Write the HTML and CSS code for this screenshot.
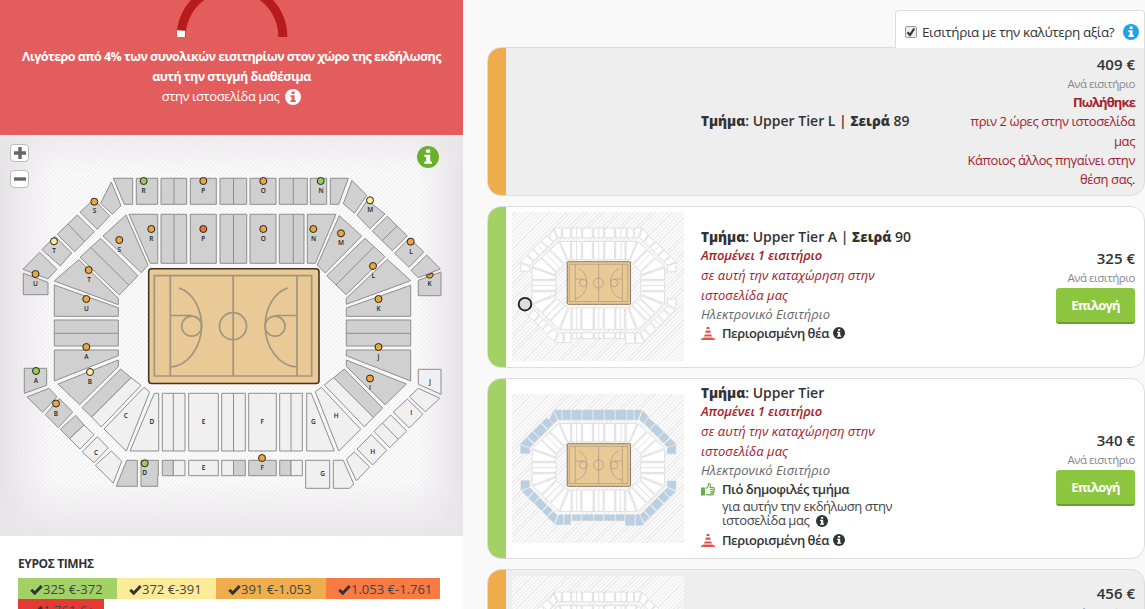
FILE: index.html
```
<!doctype html>
<html lang="el">
<head>
<meta charset="utf-8">
<title>Εισιτήρια</title>
<link rel="stylesheet" href="styles.css">
</head>

<body>
<svg class="defs" width="0" height="0">
	<defs>
		<pattern id="hatch" width="4.4" height="4.4" patternUnits="userSpaceOnUse">
			<path d="M-1 5.4L5.4 -1M-1 1L1 -1M3.4 5.4L5.4 3.4" stroke="#e3e3e3" stroke-width=".65"/>
		</pattern>
		<linearGradient id="fadeX">
			<stop offset="0" stop-color="#e6e3e7"/>
			<stop offset=".12" stop-color="#e6e3e7" stop-opacity="0"/>
			<stop offset=".9" stop-color="#e6e3e7" stop-opacity="0"/>
			<stop offset="1" stop-color="#e6e3e7"/>
		</linearGradient>
		<linearGradient id="fadeY" x2="0" y2="1">
			<stop offset="0" stop-color="#e8e6e8" stop-opacity=".7"/>
			<stop offset=".1" stop-color="#e8e6e8" stop-opacity="0"/>
			<stop offset=".86" stop-color="#e8e6e8" stop-opacity="0"/>
			<stop offset="1" stop-color="#e8e6e8"/>
		</linearGradient>
		<g id="court">
			<rect x="148.7" y="268.7" width="170.3" height="114.8" rx="3" fill="#e9c995" stroke="#49321f" stroke-width="1.6"/>
			<g class="lines">
				<path d="M154.3 275.7H311.7V376H154.3ZM170.3 275.7V376M233.2 275.7V376M297 275.7V376M170.3 315.5H192M297 315.5H275.3M179 288C194 293 201.5 310 201.5 326C201.5 347 188 366 170.3 367M287.7 288C272.7 293 265.2 310 265.2 326C265.2 347 278.7 366 297 367"/>
				<circle cx="191.7" cy="326.2" r="10"/>
				<circle cx="275" cy="326.2" r="10"/>
				<circle cx="233" cy="326.2" r="13.5"/>
			</g>
		</g>
		<g id="arena">
			<!-- upper tier -->
			<path class="up on" d="M111.3 182L121 205.7L112.3 214.3L100.7 203.3ZM113.3 178.3H132.7V204.3H124.3ZM136.3 178.3H157.7V204.3H136.3ZM161 178.3H186.7V204.3H161ZM174 178.3V204.3M190.3 178.3H216.3V204.3H190.3ZM220 178.3H246.7V204.3H220ZM233.5 178.3V204.3M250 178.3H276V204.3H250ZM279.3 178.3H307.3V204.3H279.3ZM293.3 178.3V204.3M310.3 178.3H326.7V204.3H310.3ZM330.3 178.3H348.3L338.7 204.3H330.3ZM352 180.3L366.7 195.3L354.5 213.3L343.3 203.7ZM367.3 200.3L385 214L370 228.7L357 215.3ZM387.3 216.3L407.3 236L392.3 250.7L372.3 231ZM397.3 226L382 240.7M409.3 238L423.7 252L409 267.3L394.7 253.3ZM426.7 255L440.3 269L418.3 277.7L411 270.3ZM441 272V295.7H418.3V280.3ZM97 202.5L109.7 216L97.3 229.3L80 212.3L92 201ZM77.3 215L94.3 231.7L74.7 251.7L57.3 234.3ZM68.3 224.3L85 242M55 236.3L71.7 253L60.3 266L42 249.7ZM39.7 252.3L57 269.3L48 279L23 269.3ZM23.3 273.3L48 282.3V294.7H23.3Z"/>
			<path class="up on" d="M24.3 368.3H46.7V385.3L24.3 393.3ZM49 388.3L57 396.7L42.7 412.3L27 397ZM59.3 398.3L72.7 412.3L58.3 427.7L45.3 414.7ZM75.7 415.3L84 425L69.7 438.7L60.3 429.3ZM126.7 460.3H137.3V486.3H116.3ZM141 460.3H158.3V475.7H157.7V486.3H141ZM162.3 460.3H173.3V475.7H162.3ZM233.5 460.3H245.3V475.7H233.5ZM248.7 460.3H276.3V475.7H248.7ZM279.7 460.3H291V475.7H279.7Z"/>
			<path class="up off" d="M84 425L94 434.7L80 449L69.7 438.7ZM97.3 436.7L108.3 448L94 462.7L82.3 452ZM111.3 451L121.7 461.3L113.3 483L95.3 465.3ZM173.3 460.3H185V475.7H173.3ZM188.7 460.3H218.3V475.7H188.7ZM221.7 460.3H233.5V475.7H221.7ZM291 460.3H302.3V475.7H291ZM305.7 460.3H329.7V488.3H305.7ZM333.3 460.3H343.3L353.7 484L349.7 488.3H333.3ZM354.3 452L369.7 467L356.3 480.7L346.3 459.3ZM371.3 434.7L386.7 450.3L372.7 465L357 449ZM390.7 415L406.7 431L389.7 447.7L374 431.3ZM382.7 423.3L398 439M407.3 399L423 414.3L409.3 428L393.3 412ZM418.3 388.3L439.7 398.3L425.3 411.7L409.3 396.7ZM418.3 369.3H441V394.3L418.3 384.3Z"/>
			<!-- lower tier -->
			<path class="low on" d="M129 214.3H157.7V263.3H150.3ZM161 214.3H186.7V263.3H161ZM174 214.3V263.3M190.3 214.3H216.3V263.3H190.3ZM220 214.3H246.7V263.3H220ZM233.5 214.3V263.3M250 214.3H276V263.3H250ZM279.3 214.3H304V263.3H279.3ZM293.3 214.3V263.3M307.3 214.3H336L315.3 263.3H307.3ZM339.3 215.7L361.7 236L325.3 273L317.3 265ZM365 238.3L385 256.7L346 294.7L326.7 275.7ZM373.7 247L336 285M387.3 259.3L410.7 280.7L346.3 304.3V298.3ZM410.7 285.3V316.3H346.3V308ZM346.3 320H410.7V346H346.3ZM346.3 333.3H410.7M126 215L148 265L141.3 272.7L103 236ZM100.7 238.3L138 275.7L119.3 295L80 257.3ZM90.7 247.3L128.7 285M78.7 259.7L118.3 298.3V304.7L54.3 281ZM54.3 285L118.3 307.7V316.3H54.3ZM54.3 320H118.3V346H54.3ZM54.3 333.3H118.3M54.3 350H118.3V355.7L54.3 381ZM118.3 360V366.7L79.7 404.7L58 384ZM120.7 369L131 377.7L91.7 417L82 407.7ZM344.3 369L382.7 408L373.3 417.3L333.7 377.7ZM346.3 360L406.3 384L385 404.7L346.3 366.3ZM346.3 350H410.7V381L346.3 355.7Z"/>
			<path class="low off" d="M131 377.7L141 385.3L101.3 427L91.7 417ZM144 387.3L149.7 392L126.3 451L104 429ZM154.3 393.3H158.7V451H130ZM162.3 393.3H185V451H162.3ZM173.3 393.3V451M188.7 393.3H218.3V451H188.7ZM221.7 393.3H245.3V451H221.7ZM233.5 393.3V451M248.7 393.3H276.3V451H248.7ZM279.7 393.3H302.3V451H279.7ZM291 393.3V451M306.7 393.3H311.3L334.3 451H306.7ZM321.3 387.3L360.7 429.3L338.7 451L315.3 391.7ZM324.3 385L333.7 377.7L373.3 417.3L364.3 426.7Z"/>
			<use href="#court"/>
		</g>
		<symbol id="info" viewBox="0 0 16 16">
			<circle cx="8" cy="8" r="8" fill="currentColor"/>
			<path d="M6.6 2.6h3v2.3h-3zM5.4 6.3h4.2v4.9h1.2v1.7H5.4v-1.7h1.3V8H5.4z" fill="var(--mark, #fff)"/>
		</symbol>
		<symbol id="cone" viewBox="0 0 14 15">
			<path d="M5.8 1h2.4l.5 2H5.3zM4.8 4.600h4.400l.6 2.200H4.200zM3.700 8.400h6.600l.6 2.100H3.100zM0 12.600h1.700l.7-1h9.200l.7 1H14V14H0z" fill="#d9534f"/>
		</symbol>
		<symbol id="thumb" viewBox="0 0 14 14">
			<path d="M0 5h4v8H0z" fill="#6bb044"/>
			<path d="M5 6.2C7 5 7.6 3.5 7.7 1.2 9.8 .8 9.7 3.5 9 5.2h3.6c1 .2 1 1.8 0 1.9.9.3.8 1.7-.2 1.9.7.4.5 1.5-.4 1.7.5.6 0 1.7-.9 1.7H7.5L5 11.8M9.3 7.2h3M9.3 9.1h3M9.3 10.9h2.5" fill="none" stroke="#6bb044" stroke-width="1.2"/>
		</symbol>
		<symbol id="check" viewBox="0 0 13 11">
			<path d="M1.3 5.8L4.7 9.2L11.7 2" fill="none" stroke="#333" stroke-width="3"/>
		</symbol>
	</defs>
</svg>

<div class="page">
	<div class="left">
		<div class="alert">
			<svg class="gauge" width="112" height="37" viewBox="176 0 112 37">
				<path d="M181.2 37A50.8 50.8 0 0 1 282.8 37" fill="none" stroke="#b81b1b" stroke-width="9"/>
				<path d="M177 30.2L185.3 30.8L185 37H177Z" fill="#fff"/>
			</svg>
			<p><b>Λιγότερο από 4% των συνολικών εισιτηρίων στον χώρο της εκδήλωσης</b></p>
			<p><b>αυτή την στιγμή διαθέσιμα</b></p>
			<p>στην ιστοσελίδα μας <svg class="ico-info"><use href="#info"/></svg></p>
		</div>

		<div class="map">
			<svg width="463" height="401" viewBox="0 135 463 401">
				<rect class="bg" y="135" width="463" height="401"/>
				<rect y="135" width="463" height="401" fill="url(#hatch)"/>
				<rect y="135" width="463" height="401" fill="url(#fadeX)"/>
				<rect y="135" width="463" height="401" fill="url(#fadeY)"/>
				<use href="#arena"/>
				<g class="dots">
					<g class="green">
						<circle cx="143.7" cy="181" r="3.5"/><circle cx="320.7" cy="181" r="3.5"/><circle cx="36" cy="371" r="3.5"/><circle cx="144.7" cy="463.3" r="3.5"/>
					</g>
					<g class="yellow">
						<circle cx="54" cy="241.3" r="3.5"/><circle cx="370" cy="200.3" r="3.5"/><circle cx="90" cy="372" r="3.5"/>
					</g>
					<g class="orange">
						<circle cx="203.3" cy="181" r="3.5"/><circle cx="94.3" cy="201.7" r="3.5"/><circle cx="35.5" cy="274" r="3.5"/><circle cx="119.3" cy="240" r="3.5"/><circle cx="151.3" cy="229" r="3.5"/><circle cx="88.7" cy="270" r="3.5"/><circle cx="86.3" cy="299" r="3.5"/><circle cx="263.3" cy="181" r="3.5"/><circle cx="263.3" cy="229" r="3.5"/><circle cx="313.3" cy="229" r="3.5"/><circle cx="341" cy="233.3" r="3.5"/><circle cx="410.7" cy="241.7" r="3.5"/><circle cx="373" cy="266" r="3.5"/><path d="M426.2 275.5L432.7 273A3.5 3.5 0 1 1 426.2 275.5Z"/><circle cx="378.5" cy="299" r="3.5"/><circle cx="86.3" cy="347" r="3.5"/><circle cx="56" cy="403.5" r="3.5"/><circle cx="378.5" cy="347" r="3.5"/><circle cx="370" cy="378.5" r="3.5"/><circle cx="262" cy="458" r="3.5"/>
					</g>
					<g class="red"><circle cx="203.3" cy="229" r="3.5"/></g>
				</g>
				<g class="names">
					<text x="143.7" y="193">R</text><text x="203.3" y="193">P</text><text x="263.3" y="193">O</text><text x="321" y="193">N</text>
					<text x="94.5" y="213">S</text><text x="54" y="253">T</text><text x="35.5" y="286">U</text>
					<text x="119.3" y="252">S</text><text x="151.3" y="241">R</text><text x="203.3" y="241">P</text><text x="263.3" y="241">O</text><text x="313.5" y="241">N</text>
					<text x="89" y="282">T</text><text x="86.5" y="311">U</text><text x="341" y="245">M</text><text x="370.3" y="212">M</text>
					<text x="411" y="254">L</text><text x="373.3" y="278">L</text><text x="429.5" y="286">K</text><text x="378.5" y="311">K</text>
					<text x="86.5" y="359">A</text><text x="36" y="383">A</text><text x="90" y="384">B</text><text x="56" y="416">B</text>
					<text x="125.7" y="418">C</text><text x="96" y="455">C</text><text x="152" y="424">D</text><text x="144.7" y="475">D</text>
					<text x="203.5" y="424">E</text><text x="203.5" y="470">E</text><text x="262.3" y="424">F</text><text x="262.3" y="470">F</text>
					<text x="313.3" y="424">G</text><text x="322.7" y="476">G</text><text x="336.3" y="418">H</text><text x="372.7" y="454">H</text>
					<text x="411.3" y="415">I</text><text x="370" y="390">I</text><text x="378.5" y="359">J</text><text x="430" y="384">J</text>
				</g>
			</svg>
			<div class="zoom">
				<span class="btn"><svg width="12" height="12"><path d="M6 0V12M0 6H12" stroke="#666" stroke-width="3.4"/></svg></span>
				<span class="btn"><svg width="12" height="12"><path d="M0 6H12" stroke="#666" stroke-width="3.4"/></svg></span>
			</div>
			<svg class="map-info"><use href="#info"/></svg>
		</div>

		<div class="legend">
			<h4>ΕΥΡΟΣ ΤΙΜΗΣ</h4>
			<div class="ranges">
				<span class="range r1"><svg><use href="#check"/></svg>325 €-372</span>
				<span class="range r2"><svg><use href="#check"/></svg>372 €-391</span>
				<span class="range r3"><svg><use href="#check"/></svg>391 €-1.053</span>
				<span class="range r4"><svg><use href="#check"/></svg>1.053 €-1.761</span>
				<span class="range r5"><svg><use href="#check"/></svg>1.761 €+</span>
			</div>
		</div>
	</div>

	<div class="right">
		<div class="best">
			<span class="box"><svg width="10" height="10"><path d="M1.5 5.2L4 8L8.3 1.5" fill="none" stroke="#333" stroke-width="2.2"/></svg></span>
			<span class="best-text">Εισιτήρια με την καλύτερη αξία?</span>
			<svg class="ico-best"><use href="#info"/></svg>
		</div>

		<div class="card sold first">
			<div class="bar orange-bar"></div>
			<div class="thumb"></div>
			<div class="info">
				<h3><b>Τμήμα</b>: Upper Tier L | <b>Σειρά</b> 89</h3>
			</div>
			<div class="price">
				<div class="amount">409 €</div>
				<div class="per">Ανά εισιτήριο</div>
				<div class="gone"><b>Πωλήθηκε</b><br>πριν 2 ώρες στην ιστοσελίδα<br>μας<br>Κάποιος άλλος πηγαίνει στην<br>θέση σας.</div>
			</div>
		</div>

		<div class="card second">
			<div class="bar green-bar"></div>
			<div class="thumb">
				<svg class="mini" width="172" height="149" viewBox="0 135 463 401">
					<use href="#arena"/>
					<circle cx="35" cy="383" r="17" fill="#ddd" stroke="#222" stroke-width="5"/>
				</svg>
			</div>
			<div class="info">
				<h3><b>Τμήμα</b>: Upper Tier A | <b>Σειρά</b> 90</h3>
				<p class="left-one">Απομένει 1 εισιτήριο</p>
				<p class="where">σε αυτή την καταχώρηση στην<br>ιστοσελίδα μας</p>
				<p class="kind">Ηλεκτρονικό Εισιτήριο</p>
				<p class="tag"><svg class="cone"><use href="#cone"/></svg><b>Περιορισμένη θέα</b><svg class="ico-dark"><use href="#info"/></svg></p>
			</div>
			<div class="price">
				<div class="amount">325 €</div>
				<div class="per">Ανά εισιτήριο</div>
				<a class="select">Επιλογή</a>
			</div>
		</div>

		<div class="card third">
			<div class="bar green-bar"></div>
			<div class="thumb">
				<svg class="mini picked" width="172" height="149" viewBox="0 135 463 401">
					<use href="#arena"/>
				</svg>
			</div>
			<div class="info">
				<h3><b>Τμήμα</b>: Upper Tier</h3>
				<p class="left-one">Απομένει 1 εισιτήριο</p>
				<p class="where">σε αυτή την καταχώρηση στην<br>ιστοσελίδα μας</p>
				<p class="kind">Ηλεκτρονικό Εισιτήριο</p>
				<p class="tag"><svg class="hand"><use href="#thumb"/></svg><b>Πιό δημοφιλές τμήμα</b></p>
				<p class="note">για αυτήν την εκδήλωση στην<br>ιστοσελίδα μας <svg class="ico-dark"><use href="#info"/></svg></p>
				<p class="tag"><svg class="cone"><use href="#cone"/></svg><b>Περιορισμένη θέα</b><svg class="ico-dark"><use href="#info"/></svg></p>
			</div>
			<div class="price">
				<div class="amount">340 €</div>
				<div class="per">Ανά εισιτήριο</div>
				<a class="select">Επιλογή</a>
			</div>
		</div>

		<div class="card sold fourth">
			<div class="bar orange-bar"></div>
			<div class="thumb">
				<svg class="mini" width="172" height="149" viewBox="0 135 463 401">
					<use href="#arena"/>
				</svg>
			</div>
			<div class="info"></div>
			<div class="price">
				<div class="amount">456 €</div>
				<div class="per">Ανά εισιτήριο</div>
			</div>
		</div>
	</div>
</div>
</body>
</html>
```
FILE: styles.css
```
* { margin:0; padding:0; box-sizing:border-box;}
body{ font-family:"Open Sans","Noto Sans",sans-serif; font-size:13px; color:#333; background:#f9f9f9; overflow:hidden;}
.defs{ position:absolute;}
.page{ display:flex; width:1145px; height:609px; overflow:hidden;}

/* left column */
.left{ width:463px; height:609px; background:#fff; overflow:hidden; flex:none;}
.alert{ height:135px; background:#e45d5d; color:#fff; text-align:center; border-bottom:1px solid #dd6262;}
.alert p{ height:20px; line-height:20px; font-size:13px; letter-spacing:-.42px; white-space:nowrap;}
.alert b{ font-size:12.5px; letter-spacing:-.53px;}
.gauge{ display:block; margin:0 auto 9px;}
.ico-info{ width:16px; height:16px; vertical-align:-4px; margin-left:3px; --mark:#e45d5d;}

.map{ height:401px; position:relative; --up-on:#d0d0d0; --up-off:#f0f0f0; --low-on:#d0d0d0; --low-off:#f0f0f0; --edge:#8e8e8e;}
.map > svg{ display:block;}
.bg{ fill:#fcfbfc;}
.up, .low{ stroke:var(--edge); stroke-width:var(--edge-width, 1);}
.up.on{ fill:var(--up-on);}
.up.off{ fill:var(--up-off);}
.low.on{ fill:var(--low-on);}
.low.off{ fill:var(--low-off);}
.lines{ fill:none; stroke:#a09584; stroke-width:1.7;}
.dots{ stroke:#2b2418; stroke-width:1;}
.green{ fill:#96cb5b;}
.yellow{ fill:#fbec95;}
.orange{ fill:#eba545;}
.red{ fill:#f3713d;}
.names{ font:600 6.5px "Open Sans","Noto Sans",sans-serif; fill:#222; text-anchor:middle;}
.zoom{ position:absolute; left:10px; top:9px; display:flex; flex-direction:column; gap:8px;}
.btn{ width:19px; height:18px; border:1px solid #bbb; border-radius:4px; background:#fff; display:flex; align-items:center; justify-content:center;}
.map > .map-info{ position:absolute; left:417px; top:11px; width:22px; height:22px; color:#6bb02a;}

.legend{ padding:18px 18px 0; }
.legend h4{ font-size:12px; line-height:20px; font-weight:700; letter-spacing:-.4px; height:24px;}
.ranges{ display:flex; flex-wrap:wrap;}
.range{ height:20.5px; line-height:22px; padding-left:12px; font-size:13px; white-space:nowrap; color:#444;}
.range svg{ width:13px; height:11px; vertical-align:-1px;}
.r1{ width:99px; background:#a2d165;}
.r2{ width:99px; background:#feeb98;}
.r3{ width:110px; background:#efad4d;}
.r4{ width:114px; background:#f77b43;}
.r5{ width:86px; background:#e53935;}

/* right column */
.right{ width:658px; margin-left:24px; flex:none; display:flex; flex-direction:column;}
.best{ align-self:flex-end; flex:none; width:250px; height:38px; margin-top:10px; margin-bottom:-1px; background:#fff; border:1px solid #ddd; border-bottom:0; border-radius:4px 4px 0 0; display:flex; align-items:center; padding:4px 0 0 9px; z-index:1;}
.best-text{ font-size:13.5px; letter-spacing:-.4px; margin-left:5px; width:195px; white-space:nowrap;}
.box{ width:12px; height:12px; border:1px solid #999; border-radius:2px; background:#eee; display:flex; flex:none;}
.ico-best{ width:16px; height:16px; margin-left:6px; color:#1fa2e8; flex:none;}

.card{ display:flex; background:#fff; border:1px solid #ddd; border-radius:14px; overflow:hidden; flex:none; margin-bottom:10px;}
.sold{ background:#eee;}
.first{ height:148.5px; border-top-right-radius:0;}
.second{ height:162px;}
.third{ height:181px;}
.fourth{ height:170px;}
.bar{ width:19px; margin:-1px 0 -1px -1px; flex:none;}
.orange-bar{ background:#efac4d;}
.green-bar{ background:#a2d165;}
.thumb{ width:172px; margin-left:6px; flex:none; display:flex; align-items:center;}
.fourth .thumb{ align-items:flex-start; padding-top:6px;}
.mini{ background:#fafafa repeating-linear-gradient(135deg, transparent 0 2px, #ebebeb 2px 3px); --up-on:#fff; --up-off:#fff; --low-on:#fff; --low-off:#fff; --edge:#ccc; --edge-width:1.5;}
.picked{ --up-on:#b7d0e6; --up-off:#b7d0e6;}
.info{ width:220px; margin-left:17px; padding-bottom:2px; flex:none; display:flex; flex-direction:column; justify-content:center; white-space:nowrap;}
.first .info{ padding-bottom:0;}
.info h3{ font-size:14px; font-weight:600; line-height:18px;}
.info h3 b{ font-size:13.5px;}
.left-one{ font-size:13px; line-height:19px; font-style:italic; font-weight:600; letter-spacing:-.2px; color:#a51e26;}
.where{ font-size:13px; line-height:20px; font-style:italic; color:#a5202c;}
.kind{ font-size:13px; line-height:18px; font-style:italic; color:#666;}
.tag{ height:20px; line-height:20px; font-size:13px; display:flex; align-items:center;}
.tag b{ font-weight:600; letter-spacing:-.5px;}
.cone, .hand{ width:14px; height:15px; margin-right:7px;}
.ico-dark{ width:12px; height:12px; margin-left:4px; color:#2f3538; vertical-align:-2px;}
.note{ padding-left:21px; font-size:13px; line-height:14px; height:31px; letter-spacing:-.42px; color:#444;}
.price{ margin-left:auto; padding-right:9px; text-align:right; white-space:nowrap; display:flex; flex-direction:column; align-items:flex-end; justify-content:center;}
.amount{ font-size:15px; font-weight:600; line-height:22px;}
.per{ font-size:11.5px; line-height:18px; letter-spacing:-.5px; color:#888;}
.gone{ font-size:13px; line-height:19.2px; letter-spacing:-.42px; color:#a5202c;}
.gone b{ letter-spacing:-.9px;}
.select{ display:block; width:79px; height:36px; margin-top:1px; line-height:35px; background:#8cc63f; border-bottom:2px solid #6f9f30; border-radius:3px; color:#fff; font-weight:700; letter-spacing:-.8px; text-align:center;}
.second .price, .third .price{ padding-bottom:2px;}
.fourth .price{ justify-content:flex-start; padding-top:12px;}
```
